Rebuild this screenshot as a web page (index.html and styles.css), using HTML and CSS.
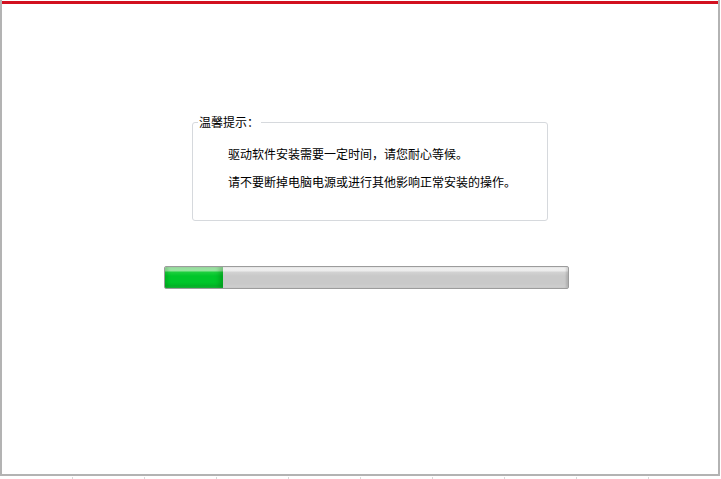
FILE: index.html
```html
<!DOCTYPE html>
<html lang="zh-CN">
<head>
<meta charset="utf-8">
<title>安装</title>
<link rel="stylesheet" href="styles.css">
</head>
<body>
<div class="frame">
  <div class="accent"></div>
  <fieldset class="notice">
    <legend class="notice-title">温馨提示：</legend>
    <p class="notice-line">驱动软件安装需要一定时间，请您耐心等候。</p>
    <p class="notice-line">请不要断掉电脑电源或进行其他影响正常安装的操作。</p>
  </fieldset>
  <div class="progress">
    <div class="progress-fill" style="width: 58px;"></div>
  </div>
</div>
<div class="ticks">
  <span class="tick first"></span><span class="tick"></span><span class="tick"></span><span class="tick"></span><span class="tick"></span><span class="tick"></span><span class="tick"></span><span class="tick"></span><span class="tick"></span>
</div>
</body>
</html>
```
FILE: styles.css
```css
html, body {
  margin: 0;
  padding: 0;
  background: #ffffff;
}
body {
  width: 721px;
  height: 479px;
  overflow: hidden;
  font-family: "Noto Sans CJK SC", "Noto Sans", sans-serif;
  font-size: 12px;
  color: #000;
}
.frame {
  box-sizing: border-box;
  width: 720px;
  height: 476px;
  border-left: 2px solid #b3b3b3;
  border-right: 2px solid #b3b3b3;
  border-bottom: 2px solid #b3b3b3;
  padding-top: 1px;
  display: flex;
  flex-direction: column;
  align-items: flex-start;
}
.accent {
  align-self: stretch;
  height: 3px;
  background: #d2101f;
}
.notice {
  box-sizing: border-box;
  width: 356px;
  margin: 111px 0 0 190px;
  padding: 11px 10px 24px 4px;
  border: 1px solid #d6d9dd;
  border-radius: 3px;
}
.notice-title {
  padding: 0 2px 0 1px;
  margin: 0 0 0 1px;
  line-height: 14px;
}
.notice-line {
  margin: 0;
  padding-left: 31px;
  line-height: 28px;
  white-space: nowrap;
}
.progress {
  box-sizing: border-box;
  width: 405px;
  height: 23px;
  margin: 45px 0 0 162px;
  border: 1px solid #9c9c9c;
  border-radius: 2px;
  background: linear-gradient(to bottom, #f2f2f2 0, #ececec 4px, #d3d3d3 5px, #c9c9c9 9px, #c9c9c9 17px, #cfcfcf 20px, #d8d8d8 21px);
  box-shadow: inset -2px 0 2px rgba(0, 0, 0, 0.12), inset 2px 0 2px rgba(0, 0, 0, 0.06);
  overflow: hidden;
  display: flex;
}
.progress-fill {
  height: 100%;
  background: linear-gradient(to bottom, #b7efbd 0, #8fe69a 4px, #1fcf3f 5px, #00c62a 9px, #00c62a 15px, #03b828 19px, #22c244 21px);
  box-shadow: inset -4px 0 4px rgba(0, 80, 0, 0.25), inset 3px 0 3px rgba(0, 80, 0, 0.15);
}
.ticks {
  display: flex;
  height: 2px;
  margin-top: 1px;
}
.tick {
  box-sizing: border-box;
  width: 72px;
  height: 2px;
  border-right: 1px solid #d9d9d9;
}
.tick.first {
  width: 73px;
}
```
